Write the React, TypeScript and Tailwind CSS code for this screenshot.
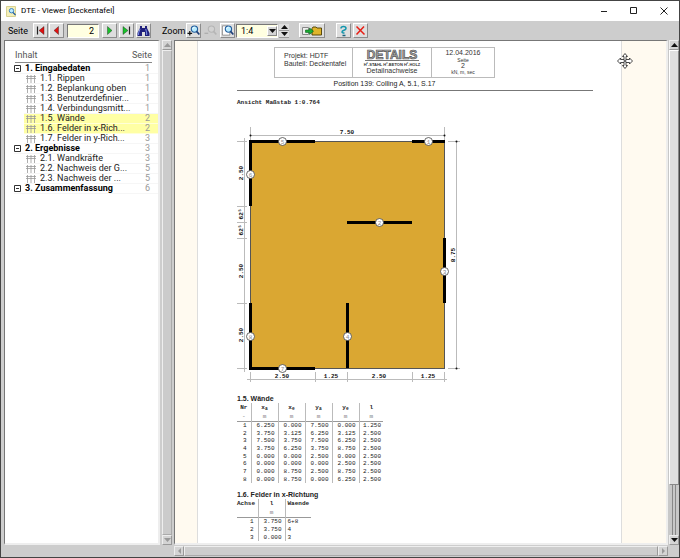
import type { ReactNode } from 'react'

type Entry = { label: string; page: number; level: 0 | 1; active?: boolean }

const entries: Entry[] = [
  { label: '1. Eingabedaten', page: 1, level: 0 },
  { label: '1.1. Rippen', page: 1, level: 1 },
  { label: '1.2. Beplankung oben', page: 1, level: 1 },
  { label: '1.3. Benutzerdefinier...', page: 1, level: 1 },
  { label: '1.4. Verbindungsmitt...', page: 1, level: 1 },
  { label: '1.5. Wände', page: 2, level: 1, active: true },
  { label: '1.6. Felder in x-Rich...', page: 2, level: 1, active: true },
  { label: '1.7. Felder in y-Rich...', page: 3, level: 1 },
  { label: '2. Ergebnisse', page: 3, level: 0 },
  { label: '2.1. Wandkräfte', page: 3, level: 1 },
  { label: '2.2. Nachweis der G...', page: 5, level: 1 },
  { label: '2.3. Nachweis der ...', page: 5, level: 1 },
  { label: '3. Zusammenfassung', page: 6, level: 0 },
]

const walls = [
  ['6.250', '0.000', '7.500', '0.000', '1.250'],
  ['3.750', '3.125', '6.250', '3.125', '2.500'],
  ['7.500', '3.750', '7.500', '6.250', '2.500'],
  ['3.750', '6.250', '3.750', '8.750', '2.500'],
  ['0.000', '0.000', '2.500', '0.000', '2.500'],
  ['0.000', '0.000', '0.000', '2.500', '2.500'],
  ['0.000', '8.750', '2.500', '8.750', '2.500'],
  ['0.000', '8.750', '0.000', '6.250', '2.500'],
]

const fields = [
  ['3.750', '6+8'],
  ['3.750', '4'],
  ['0.000', '3'],
]

function ToolButton({ label, wide, children }: { label: string; wide?: boolean; children: ReactNode }) {
  return (
    <button
      type="button"
      aria-label={label}
      className={`${wide ? 'w-[26px]' : 'w-[15px]'} flex h-[15px] shrink-0 items-center justify-center border border-t-white border-r-[#8c8c8c] border-b-[#8c8c8c] border-l-white bg-[#dedede]`}
    >
      {children}
    </button>
  )
}

function ArrowIcon({ color, left, bar }: { color: string; left?: boolean; bar?: boolean }) {
  return (
    <svg width="11" height="11" viewBox="0 0 11 11">
      <g transform={left ? 'translate(11 0) scale(-1 1)' : undefined}>
        <path d={bar ? 'M2 1.500v8l5-4z' : 'M3.500 1.500v8l4.500-4z'} fill={color} stroke="#222" strokeWidth=".4" />
        {bar && <path d="M8.500 1.500v8" stroke="#222" strokeWidth="1.200" />}
      </g>
    </svg>
  )
}

function MagnifierIcon({ mode }: { mode: 'in' | 'out' | 'page' }) {
  const off = mode === 'out'
  return (
    <svg width="13" height="13" viewBox="0 0 14 13">
      {mode === 'page' && <path d="M1.500 1.500h6l2 2v8h-8z" fill="#fff" stroke="#777" strokeWidth=".8" />}
      <circle cx="8" cy="5" r="3.400" fill={off ? '#d2d2d2' : '#b9ecff'} stroke={off ? '#b5b5b5' : '#245f9e'} strokeWidth="1.200" />
      {!off && <path d="M6.100 4.600q.5-1.600 2-1.600" stroke="#fff" strokeWidth="1" fill="none" />}
      <path d="M10.300 7.500l3 3.300" stroke={off ? '#b5b5b5' : '#1d3e76'} strokeWidth="1.800" />
      {mode !== 'page' && <path d={mode === 'in' ? 'M.5 9.500h5M3 7v5' : 'M.5 9.500h4'} stroke={off ? '#aaa' : '#111'} strokeWidth="1.300" />}
    </svg>
  )
}

function BinocularsIcon() {
  return (
    <svg width="13" height="12" viewBox="0 0 13 12">
      <path d="M3 1h2v2h3V1h2v2l2.500 5v3H8V7H5v4H.5V8L3 3z" fill="#20207c" />
      <path d="M3 4L1.600 8v2M8.700 4l1 4v2" stroke="#7d8fe8" strokeWidth="1" fill="none" />
    </svg>
  )
}

function ExportIcon() {
  return (
    <svg width="22" height="12" viewBox="0 0 22 12">
      <path d="M1.500 2.500h6v7h-6z" fill="#eee" stroke="#888" />
      <path d="M11 3.500l1-1.500h3l1 1h4.500v7H11z" fill="#dfb52c" stroke="#4c3c00" strokeWidth=".9" />
      <path d="M4.500 5h4V3l4 3.200-4 3.200v-2h-4z" fill="#1cae36" stroke="#075e16" strokeWidth=".6" />
    </svg>
  )
}

function Triangle({ up, down, left, gray }: { up?: boolean; down?: boolean; left?: boolean; gray?: boolean }) {
  const d = up ? 'M0 5h7L3.500 1z' : down ? 'M0 1h7L3.500 5z' : left ? 'M5 0v6L2 3z' : 'M2 0v6l3-3z'
  return (
    <svg width="7" height="6" viewBox="0 0 7 6">
      <path d={d} fill={gray ? '#999' : '#111'} />
    </svg>
  )
}

function ScrollButton({ label, children }: { label: string; children: ReactNode }) {
  return (
    <button
      type="button"
      aria-label={label}
      className="flex h-[10px] w-[10px] shrink-0 items-center justify-center border border-t-[#eee] border-r-[#999] border-b-[#999] border-l-[#eee] bg-[#d4d4d4]"
    >
      {children}
    </button>
  )
}

function TitleBar() {
  return (
    <header className="flex h-5 shrink-0 items-center bg-white pr-[11px] pl-[5px]">
      <svg width="11" height="11" viewBox="0 0 11 11">
        <path d="M.5 .5h9v10h-9z" fill="#f4efb9" stroke="#d8d293" />
        <circle cx="5.500" cy="4.700" r="2.200" fill="#bdeaff" stroke="#3b83c4" />
        <path d="M7 6.500l2.500 2.500" stroke="#245f9e" strokeWidth="1.300" />
      </svg>
      <h1 className="ml-1 flex-1 font-[Roboto,sans-serif] text-[8px] text-black">DTE - Viewer [Deckentafel]</h1>
      <div className="flex gap-[22px]">
        <button type="button" aria-label="Minimieren">
          <svg width="8" height="8" viewBox="0 0 8 8"><path d="M1 4.500h6" stroke="#222" /></svg>
        </button>
        <button type="button" aria-label="Maximieren">
          <svg width="8" height="8" viewBox="0 0 8 8"><path d="M.5 .5h6v6h-6z" fill="none" stroke="#222" /></svg>
        </button>
        <button type="button" aria-label="Schließen">
          <svg width="8" height="8" viewBox="0 0 8 8"><path d="M.5 .5l7 7M7.500 .5l-7 7" stroke="#222" /></svg>
        </button>
      </div>
    </header>
  )
}

function Toolbar() {
  return (
    <div className="flex h-[19px] shrink-0 items-center bg-[#cdcdcd] pl-[7px] font-[Roboto,sans-serif] text-[9px] leading-[10px] text-black">
      <label htmlFor="page" className="w-[25px]">Seite</label>
      <div className="flex gap-[1px]">
        <ToolButton label="Erste Seite"><ArrowIcon color="#e01010" left bar /></ToolButton>
        <ToolButton label="Vorige Seite"><ArrowIcon color="#e01010" left /></ToolButton>
      </div>
      <input
        id="page"
        defaultValue="2"
        className="mx-[3px] h-[14px] w-8 border border-t-[#777] border-r-white border-b-white border-l-[#777] bg-[#ffffe1] pr-1 text-right text-[9px] outline-none"
      />
      <div className="flex gap-[2px]">
        <ToolButton label="Nächste Seite"><ArrowIcon color="#18c22a" /></ToolButton>
        <ToolButton label="Letzte Seite"><ArrowIcon color="#18c22a" bar /></ToolButton>
        <ToolButton label="Suchen"><BinocularsIcon /></ToolButton>
      </div>
      <label htmlFor="zoom" className="ml-[11px] w-6">Zoom</label>
      <div className="flex gap-[2px]">
        <ToolButton label="Vergrößern"><MagnifierIcon mode="in" /></ToolButton>
        <button type="button" aria-label="Verkleinern" disabled className="flex h-[15px] w-[15px] items-center justify-center">
          <MagnifierIcon mode="out" />
        </button>
        <ToolButton label="Ganze Seite"><MagnifierIcon mode="page" /></ToolButton>
      </div>
      <div className="relative ml-[1px] h-[14px] w-[42px] border border-t-[#777] border-r-white border-b-white border-l-[#777] bg-[#ffffe1]">
        <select id="zoom" className="block h-3 w-full appearance-none bg-transparent pl-1 text-[9px] leading-3 outline-none">
          <option>1:4</option>
        </select>
        <span className="pointer-events-none absolute top-[1px] right-0 flex h-[10px] w-[10px] items-center justify-center border border-t-white border-r-[#888] border-b-[#888] border-l-white bg-[#d4d4d4]">
          <Triangle down />
        </span>
      </div>
      <div className="ml-[1px] flex flex-col">
        <button type="button" aria-label="Zoom höher" className="flex h-[7px] w-[10px] items-center justify-center border-b border-[#999] bg-[#dedede]"><Triangle up /></button>
        <button type="button" aria-label="Zoom niedriger" className="flex h-[7px] w-[10px] items-center justify-center border-b border-[#999] bg-[#dedede]"><Triangle down /></button>
      </div>
      <div className="ml-[10px] flex gap-[11px]">
        <ToolButton label="Exportieren" wide><ExportIcon /></ToolButton>
        <div className="flex gap-[2px]">
          <ToolButton label="Hilfe">
            <svg width="11" height="12" viewBox="0 0 11 12">
              <path d="M3 3.500Q3 1.500 5.500 1.500T8 3.500Q8 4.500 6 5.300T4 7q0 1 2.500 1" fill="none" stroke="#1496ad" strokeWidth="1.500" />
              <path d="M4.500 10.500h3" stroke="#1b627c" strokeWidth="1.500" />
            </svg>
          </ToolButton>
          <ToolButton label="Beenden">
            <svg width="11" height="11" viewBox="0 0 11 11"><path d="M1.500 1.500l8 8M9 1.500l-7.500 8" stroke="#e81e14" strokeWidth="1.500" /></svg>
          </ToolButton>
        </div>
      </div>
    </div>
  )
}

function Contents() {
  return (
    <nav className="w-[156px] shrink-0 overflow-hidden border-t border-r-2 border-b-2 border-l border-t-[#777] border-r-[#eee] border-b-[#eee] border-l-[#777] bg-white pt-[9px] font-[Roboto,sans-serif] text-[9px] leading-[10px]">
      <div className="mr-[6px] ml-[10px] flex justify-between border-b border-[#888] pb-[2px] text-[#555]">
        <span>Inhalt</span>
        <span>Seite</span>
      </div>
      <ul className="mt-[1px]">
        {entries.map((entry) => (
          <li key={entry.label} className={entry.level === 0 ? 'pl-[9px]' : 'pl-[19px]'}>
            <a
              href="#seite"
              className={`${entry.active ? 'border-[#ffffd8] bg-[#ffffa4]' : 'border-[#f6f6f6]'} flex h-[10px] items-center border-b pr-2 leading-[9px] whitespace-nowrap`}
            >
              {entry.level === 0 ? (
                <svg className="mr-1 shrink-0" width="7" height="7" viewBox="0 0 7 7">
                  <path d="M.5 .5h6v6h-6zM2 3.500h3" fill="none" stroke="#333" />
                </svg>
              ) : (
                <svg className="mr-1 ml-[2px] shrink-0" width="10" height="8" viewBox="0 0 10 8">
                  <path d="M0 1.500h10M0 3.500h10M1.500 0v8M5 0v8M8.500 0v8" fill="none" stroke="#999" strokeWidth=".8" />
                </svg>
              )}
              <span className={entry.level === 0 ? 'flex-1 font-bold text-black' : 'flex-1 text-[#222]'}>{entry.label}</span>
              <span className="text-[#999]">{entry.page}</span>
            </a>
          </li>
        ))}
      </ul>
    </nav>
  )
}

const marks = [
  { n: 5, x: 45, y: 17 },
  { n: 1, x: 191, y: 17 },
  { n: 6, x: 13, y: 50 },
  { n: 2, x: 142, y: 98 },
  { n: 3, x: 207, y: 147 },
  { n: 8, x: 13, y: 212 },
  { n: 4, x: 110, y: 212 },
  { n: 7, x: 45, y: 244 },
]

function Plan() {
  return (
    <svg className="block" width="226" height="262" viewBox="0 0 226 262" fontFamily="Liberation Mono, monospace" fontSize="6" fontWeight="bold" textAnchor="middle">
      <rect x="13.500" y="17.500" width="194" height="227" fill="#daa732" stroke="#555" />
      <g stroke="#000" strokeWidth="3">
        <path d="M12 17.500H78M175 17.500H208M110 98.500H175" />
        <path d="M13.500 17V82M13.500 179V245M110.500 179V244M207.500 114V179M12 244.500H78" />
      </g>
      <g stroke="#bbb" strokeWidth="1" fill="none">
        <path d="M13 11.500H207M13.500 3V16M207.500 3V16" />
        <path d="M7.500 14V248M0 17.500H10M0 82.500H10M0 98.500H10M0 114.500H10M0 179.500H10M0 244.500H10" />
        <path d="M10 255.500H210M13.500 248V258M78.500 248V258M110.500 248V258M175.500 248V258M207.500 248V258" />
        <path d="M219.500 17V245M211 17.500H223M211 244.500H223" />
      </g>
      <g fill="#111">
        <circle cx="13.500" cy="11.500" r="1" />
        <circle cx="207.500" cy="11.500" r="1" />
        <circle cx="219.500" cy="17.500" r="1" />
        <circle cx="219.500" cy="244.500" r="1" />
        <text x="110" y="10">7.50</text>
        <text x="45" y="254">2.50</text>
        <text x="94" y="254">1.25</text>
        <text x="142" y="254">2.50</text>
        <text x="191" y="254">1.25</text>
        <text transform="translate(6 49) rotate(-90)">2.50</text>
        <text transform="translate(6 90) rotate(-90)">62⁵</text>
        <text transform="translate(6 106) rotate(-90)">62⁵</text>
        <text transform="translate(6 147) rotate(-90)">2.50</text>
        <text transform="translate(6 211) rotate(-90)">2.50</text>
        <text transform="translate(218 131) rotate(-90)">8.75</text>
      </g>
      {marks.map((mark) => (
        <g key={mark.n}>
          <circle cx={mark.x + 0.5} cy={mark.y + 0.5} r="4" fill="#fff" stroke="#444" strokeWidth=".8" />
          <text x={mark.x + 0.5} y={mark.y + 3} fill="#888" fontSize="6" fontWeight="normal">{mark.n}</text>
        </g>
      ))}
    </svg>
  )
}

function WallTable() {
  return (
    <table className="h-[80px] w-[146px] table-fixed border-collapse font-['Liberation_Mono',monospace] text-[6px] leading-[7px] text-[#222]">
      <thead>
        <tr className="h-[9px]">
          <th className="w-[14px] border-r border-[#bbb]">Nr</th>
          <th className="w-[27px] border-r border-[#bbb]">x<sub>a</sub></th>
          <th className="w-[27px] border-r border-[#bbb]">x<sub>e</sub></th>
          <th className="w-[27px] border-r border-[#bbb]">y<sub>a</sub></th>
          <th className="w-[27px] border-r border-[#bbb]">y<sub>e</sub></th>
          <th>l</th>
        </tr>
        <tr className="h-[9px] border-b border-[#999] text-center text-[#777]">
          <td className="border-r border-[#bbb]">-</td>
          <td className="border-r border-[#bbb]">m</td>
          <td className="border-r border-[#bbb]">m</td>
          <td className="border-r border-[#bbb]">m</td>
          <td className="border-r border-[#bbb]">m</td>
          <td>m</td>
        </tr>
      </thead>
      <tbody>
        {walls.map((row, index) => (
          <tr key={index} className="text-right">
            <td className="border-r border-[#bbb] pr-1">{index + 1}</td>
            {row.map((value, column) => (
              <td key={column} className={column < 4 ? 'border-r border-[#bbb] pr-[3px]' : 'pr-[2px]'}>{value}</td>
            ))}
          </tr>
        ))}
      </tbody>
    </table>
  )
}

function FieldTable() {
  return (
    <table className="h-[42px] w-[74px] table-fixed border-collapse font-['Liberation_Mono',monospace] text-[6px] leading-[7px] text-[#222]">
      <thead>
        <tr className="h-[9px]">
          <th className="w-[21px] border-r border-[#bbb] text-left">Achse</th>
          <th className="w-[27px] border-r border-[#bbb]">l</th>
          <th className="pl-[2px] text-left">Waende</th>
        </tr>
        <tr className="h-[9px] border-b border-[#999] text-center text-[#777]">
          <td className="border-r border-[#bbb]"></td>
          <td className="border-r border-[#bbb]">m</td>
          <td></td>
        </tr>
      </thead>
      <tbody>
        {fields.map(([length, names], index) => (
          <tr key={index} className="text-right">
            <td className="border-r border-[#bbb] pr-1">{index + 1}</td>
            <td className="border-r border-[#bbb] pr-[3px]">{length}</td>
            <td className="pl-[2px] text-left">{names}</td>
          </tr>
        ))}
      </tbody>
    </table>
  )
}

function ReportHeader() {
  return (
    <div className="border-b border-[#777] pb-[2px] pl-[37px]">
      <div className="grid h-[31px] w-[221px] grid-cols-[78px_79px_1fr] border border-[#bbb] text-[7px] leading-[8px] text-[#333]">
        <div className="border-r border-[#bbb] pt-1 pl-[9px] whitespace-nowrap">
          <p>Projekt: HDTF</p>
          <p>Bauteil: Deckentafel</p>
        </div>
        <div className="border-r border-[#bbb] text-center">
          <svg className="mx-auto block" width="58" height="19" viewBox="0 0 58 19" fontFamily="Liberation Sans, sans-serif" fontWeight="bold" textAnchor="middle">
            <text x="29" y="11" fontSize="12" fill="#aaa" stroke="#555" strokeWidth=".7">DETAILS</text>
            <path d="M2 12.500H56" stroke="#777" />
            <text x="29" y="18" fontSize="4" fill="#333">H²-STAHL H²-BETON H²-HOLZ</text>
          </svg>
          <p>Detailnachweise</p>
        </div>
        <div className="text-center">
          <p className="pt-[1px]">12.04.2016</p>
          <p className="text-[5px] leading-[6px]">Seite</p>
          <p className="leading-[6px]">2</p>
          <p className="text-[5px] leading-[7px]">kN, m, sec</p>
        </div>
      </div>
      <p className="mt-[2px] w-[221px] text-center text-[7px] leading-[8px] text-[#222]">Position 139: Colling A, 5.1, S.17</p>
    </div>
  )
}

function Page() {
  return (
    <article className="mr-[44px] ml-[22px] flex-1 overflow-hidden border-x border-[#ddd] bg-white pt-[6px] pr-[28px] pl-[39px]">
      <ReportHeader />
      <p className="mt-2 font-['Liberation_Mono',monospace] text-[6px] leading-[8px] font-bold text-[#222]">Ansicht Maßstab 1:0.764</p>
      <div className="mt-[17px]">
        <Plan />
      </div>
      <h2 className="mt-[8px] text-[7px] leading-[9px] font-bold text-[#222]">1.5. Wände</h2>
      <WallTable />
      <h2 className="mt-[7px] text-[7px] leading-[9px] font-bold text-[#222]">1.6. Felder in x-Richtung</h2>
      <FieldTable />
    </article>
  )
}

export default function App() {
  return (
    <div className="flex h-screen flex-col overflow-hidden border border-[#444] bg-[#cdcdcd] font-['Liberation_Sans',sans-serif]">
      <TitleBar />
      <Toolbar />
      <div className="flex min-h-0 flex-1">
        <div className="flex pb-3 pl-[3px]">
          <Contents />
          <div className="ml-[2px] flex w-[10px] flex-col bg-[#c4c4c4]">
            <ScrollButton label="Inhalt nach oben"><Triangle up gray /></ScrollButton>
            <div className="flex-1 border border-t-[#eee] border-r-[#aaa] border-b-[#aaa] border-l-[#eee] bg-[#cbcbcb]" />
            <ScrollButton label="Inhalt nach unten"><Triangle down gray /></ScrollButton>
          </div>
        </div>
        <div className="flex min-w-0 flex-1 flex-col pl-[2px]">
          <div className="flex min-h-0 flex-1">
            <main id="seite" className="relative flex min-w-0 flex-1 overflow-hidden border-t border-r-2 border-b-2 border-l border-t-[#777] border-r-[#eee] border-b-[#eee] border-l-[#777] bg-[#fffaf0]">
              <Page />
              <svg className="absolute top-[12px] right-[33px]" width="16" height="16" viewBox="0 0 16 16">
                <path
                  d="M8 .5l2.500 3H9v3h3.500V5l3 3-3 3V9.500H9v3h1.500l-2.500 3-2.500-3H7v-3H3.500V11l-3-3 3-3v1.500H7v-3H5.500z"
                  fill="#fff"
                  stroke="#333"
                  strokeWidth=".9"
                />
                <path d="M6.500 8h3M8 6.500v3" stroke="#333" />
              </svg>
            </main>
            <div className="flex w-[11px] flex-col bg-[#c8c8c8] pl-[1px]">
              <ScrollButton label="Nach oben"><Triangle up /></ScrollButton>
              <div className="flex-1 border border-t-white border-r-[#888] border-b-[#888] border-l-white bg-[#dfdfdf]" />
              <div className="mx-auto h-[50px] w-1 border-x border-[#888]" />
              <ScrollButton label="Nach unten"><Triangle down /></ScrollButton>
            </div>
          </div>
          <div className="mr-[11px] flex h-3 shrink-0 items-center">
            <ScrollButton label="Nach links"><Triangle left gray /></ScrollButton>
            <div className="h-[10px] flex-1 border border-t-[#eee] border-r-[#999] border-b-[#aaa] border-l-[#eee] bg-[#cdcdcd]" />
            <ScrollButton label="Nach rechts"><Triangle gray /></ScrollButton>
          </div>
        </div>
      </div>
    </div>
  )
}
